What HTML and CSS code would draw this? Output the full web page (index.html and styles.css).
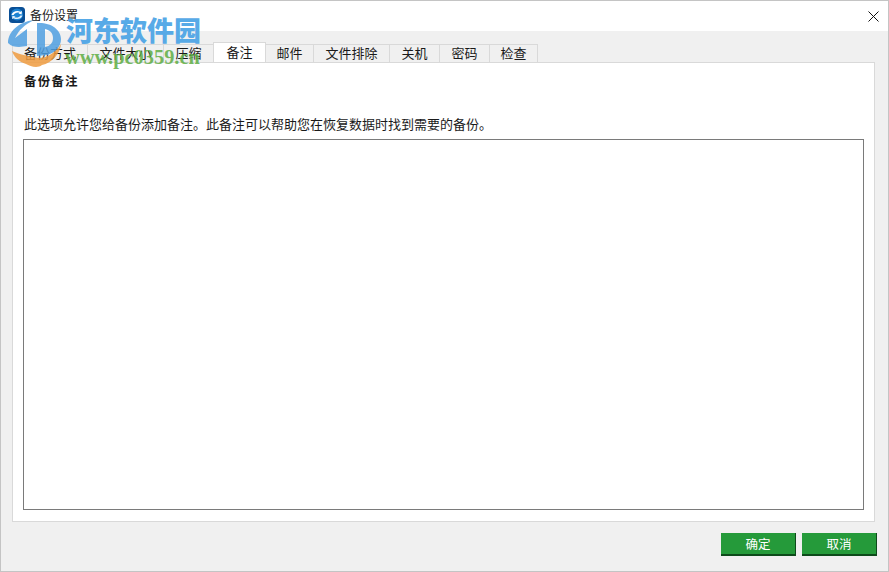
FILE: index.html
```html
<!DOCTYPE html>
<html lang="zh">
<head>
<meta charset="utf-8">
<title>备份设置</title>
<link rel="stylesheet" href="styles.css">
</head>
<body>
<div class="window">
  <header class="titlebar">
    <svg class="app-icon" viewBox="0 0 16 16" width="16" height="16" aria-hidden="true">
      <rect x="0" y="0" width="16" height="16" rx="3.5" fill="#0a4f96"/>
      <circle cx="8" cy="7.5" r="6" fill="#1b82d2"/>
      <path d="M2.5 8 C3.5 4.5 8 3 11.5 4.8 L13 4 L12.6 7.4 L9.4 6.6 L10.6 5.9 C8.4 5 5.6 5.8 4.6 8 Z" fill="#fff"/>
      <path d="M13.5 8.5 C12.5 12 8 13 4.5 11.2 L3 12 L3.4 8.8 L6.6 9.6 L5.4 10.2 C7.6 11 10.4 10.4 11.4 8.5 Z" fill="#dff0fb"/>
    </svg>
    <span class="title">备份设置</span>
    <svg class="close" viewBox="0 0 11 11" width="11" height="11" aria-hidden="true">
      <path d="M.5 .5 L10.5 10.5 M10.5 .5 L.5 10.5" stroke="#111" stroke-width="1" fill="none"/>
    </svg>
  </header>

  <main class="content">
    <nav class="tabs">
      <span class="tab w75">备份方式</span>
      <span class="tab w76">文件大小</span>
      <span class="tab w50">压缩</span>
      <span class="tab w52 active">备注</span>
      <span class="tab w48">邮件</span>
      <span class="tab w76">文件排除</span>
      <span class="tab w50">关机</span>
      <span class="tab w50">密码</span>
      <span class="tab w49">检查</span>
    </nav>
    <section class="panel">
      <h1 class="heading">备份备注</h1>
      <p class="desc">此选项允许您给备份添加备注<span class="stop">。</span>此备注可以帮助您在恢复数据时找到需要的备份<span class="stop">。</span></p>
      <div class="notes"></div>
    </section>
    <footer class="actions">
      <button class="btn" type="button">确定</button>
      <button class="btn" type="button">取消</button>
    </footer>
  </main>

  <div class="watermark">
    <svg class="wm-logo" viewBox="0 0 70 70" width="70" height="70" aria-hidden="true">
      <path d="M8 43 C8 32 18 22 34 20 C24 25 19 30 15 38 L27 29 V46 L19 47 C15 47 11 46 8 43 Z" fill="#4f9fe0" opacity=".85"/>
      <path d="M37 23 C50 22 61 29 61 39 C61 47 55 53 47 55 L37 56 Z M45 29 V47 C50 46 53 43 53 38 C53 33 50 30 45 29 Z" fill="#4f9fe0" opacity=".85" fill-rule="evenodd"/>
      <path d="M12 51 C20 55 30 56 38 58 C48 58 56 52 61 44 C60 54 52 63 42 65 C37 69 30 66 26 64 C19 62 14 57 12 51 Z" fill="#ee9b3f" opacity=".85"/>
    </svg>
    <span class="wm-name">河东软件园</span>
    <span class="wm-url">www.pc0359.cn</span>
  </div>
</div>
</body>
</html>
```

FILE: styles.css
```css
* { box-sizing: border-box; }
html, body { margin: 0; padding: 0; }
body {
  width: 889px;
  height: 572px;
  overflow: hidden;
  font-family: "Noto Sans CJK SC", "Liberation Sans", sans-serif;
  font-size: 13px;
  color: #1a1a1a;
}
.window {
  position: relative;
  width: 889px;
  height: 572px;
  display: flex;
  flex-direction: column;
  border: 1px solid #c4c4c4;
  background: #f0f0f0;
}
.titlebar {
  flex: none;
  height: 30px;
  display: flex;
  align-items: center;
  gap: 5px;
  padding: 0 9px 0 8px;
  background: #fff;
}
.app-icon { flex: none; margin-top: -2px; }
.title { font-size: 12px; line-height: 16px; margin-top: -2px; }
.close { margin-left: auto; }
.content {
  flex: 1;
  min-height: 0;
  display: flex;
  flex-direction: column;
  padding: 12px 12px 0 11px;
}
.tabs {
  flex: none;
  display: flex;
  align-items: flex-end;
  height: 19px;
  position: relative;
  z-index: 1;
}
.tab {
  height: 18px;
  margin-left: -1px;
  border: 1px solid #d9d9d9;
  border-bottom: 0;
  background: #f0f0f0;
  text-align: center;
  font-size: 13px;
  line-height: 15px;
}
.tab:first-child { margin-left: 0; }
.w75 { width: 76px; }
.w76 { width: 77px; }
.w50 { width: 51px; }
.w52 { width: 53px; }
.w48 { width: 49px; }
.w49 { width: 49px; }
.tab.active {
  height: 20px;
  background: #fff;
  position: relative;
  line-height: 17px;
}
.panel {
  flex: none;
  height: 460px;
  margin-right: 1px;
  padding: 9px 10px 11px 10px;
  display: flex;
  flex-direction: column;
  background: #fff;
  border: 1px solid #d9d9d9;
}
.heading {
  margin: 0;
  padding-left: 1px;
  font-size: 12.5px;
  font-weight: 700;
  line-height: 18px;
  letter-spacing: 1.2px;
}
.desc {
  margin: 25px 0 0;
  padding-left: 1px;
  font-size: 13px;
  line-height: 18px;
}
.stop { font-family: "Noto Sans CJK TC", sans-serif; }
.notes {
  flex: 1;
  margin-top: 6px;
  border: 1px solid #7a7a7a;
  background: #fff;
}
.actions {
  flex: none;
  display: flex;
  justify-content: flex-end;
  gap: 6px;
  margin-right: -1px;
  padding: 11px 0 0;
}
.btn {
  width: 75px;
  height: 23px;
  padding: 0;
  border: 0;
  border-right: 1px solid #0d4a1a;
  border-bottom: 2px solid #0d4a1a;
  background: #259a3a;
  color: #fff;
  font-family: inherit;
  font-size: 12.5px;
  line-height: 20px;
}
.watermark {
  position: absolute;
  left: 0;
  top: 0;
  width: 210px;
  height: 70px;
  pointer-events: none;
  z-index: 2;
}
.wm-logo { position: absolute; left: -1px; top: -1px; }
.wm-name {
  position: absolute;
  left: 65px;
  top: 12px;
  font-family: "Noto Sans CJK SC", sans-serif;
  font-weight: 900;
  font-size: 27px;
  line-height: 34px;
  color: #4fa6e6;
  white-space: nowrap;
  opacity: .95;
}
.wm-url {
  position: absolute;
  left: 64px;
  top: 45px;
  font-family: "Liberation Serif", serif;
  font-weight: 700;
  font-size: 20.4px;
  line-height: 22px;
  color: #5fae45;
  white-space: nowrap;
  opacity: .85;
}
```
